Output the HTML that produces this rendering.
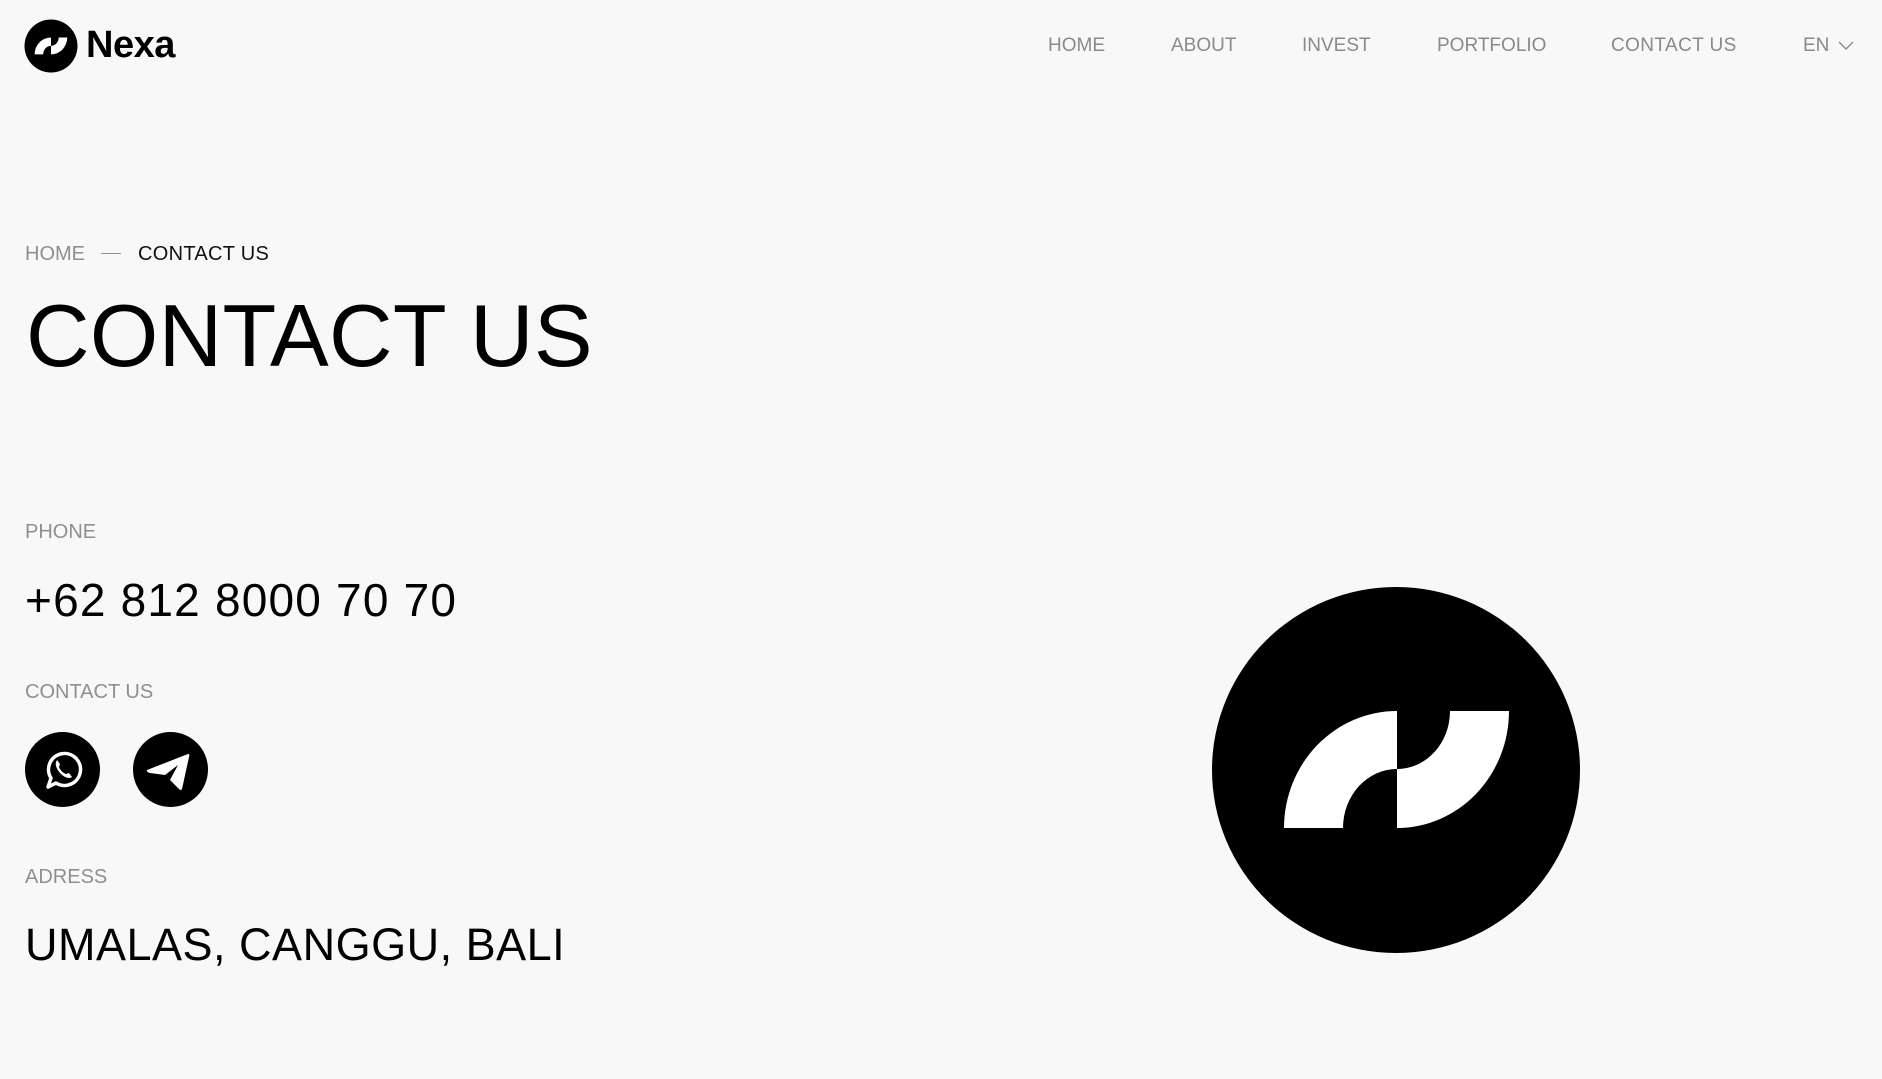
<!DOCTYPE html>
<html><head><meta charset="utf-8"><style>
html,body{margin:0;padding:0;background:#f8f8f8;width:1882px;height:1079px;overflow:hidden;font-family:"Liberation Sans",sans-serif;}
.a{position:absolute;white-space:nowrap;line-height:1;}
.nav{font-size:19px;color:#8a8a8a;top:36px;}
.lbl{font-size:20px;color:#8f8f8f;left:25px;}
.ic{position:absolute;width:75px;height:75px;border-radius:50%;background:#000;top:732px;}
</style></head><body>
<svg class="a" style="left:24px;top:19px" width="54" height="54" viewBox="0 0 54 54">
<circle cx="27" cy="27" r="26.5" fill="#000"/>
<g transform="translate(27,27) scale(0.145) translate(-1397,-770)" fill="#fff">
<path d="M1284 828 A113 117 0 0 1 1397 711 L1397 769 A54 59 0 0 0 1343 828 Z"/>
<path d="M1397 828 A112 117 0 0 0 1509 711 L1450 711 A53 58 0 0 1 1397 769 Z"/>
</g></svg>
<div class="a" style="left:86px;top:26px;font-size:38px;font-weight:bold;letter-spacing:-0.5px;color:#000">Nexa</div>
<div class="a nav" style="left:1048px">HOME</div>
<div class="a nav" style="left:1171px">ABOUT</div>
<div class="a nav" style="left:1302px">INVEST</div>
<div class="a nav" style="left:1437px">PORTFOLIO</div>
<div class="a nav" style="left:1611px;letter-spacing:0.4px">CONTACT US</div>
<div class="a nav" style="left:1803px">EN</div>
<svg class="a" style="left:1838px;top:41px" width="16" height="10" viewBox="0 0 16 10"><path d="M1 1 L8 8 L15 1" stroke="#8a8a8a" stroke-width="1.4" fill="none"/></svg>
<div class="a" style="left:25px;top:244px;font-size:20px;color:#8f8f8f">HOME</div>
<div class="a" style="left:101px;top:253px;width:20px;height:1px;background:#8f8f8f"></div>
<div class="a" style="left:138px;top:244px;font-size:20px;color:#111;letter-spacing:0.3px">CONTACT US</div>
<div class="a" style="left:26px;top:292px;font-size:88px;color:#000;letter-spacing:0.3px">CONTACT US</div>
<div class="a lbl" style="top:522px">PHONE</div>
<div class="a" style="left:25px;top:577px;font-size:46px;color:#000;letter-spacing:1.2px">+62 812 8000 70 70</div>
<div class="a lbl" style="top:682px">CONTACT US</div>
<div class="ic" style="left:25px"><svg width="75" height="75" viewBox="0 0 75 75"><path d="M23 55 L26 46 A16 16 0 1 1 31 51 Z" fill="none" stroke="#fff" stroke-width="3.5" stroke-linejoin="round"/><path d="M31 30 C30 33 32 38 36 42 C40 46 45 47 47 45 L44 41 L41 42 C38 41 35 38 34 35 L35 32 L32 28 Z" fill="#fff"/></svg></div>
<div class="ic" style="left:133px"><svg width="75" height="75" viewBox="0 0 75 75"><path d="M14 38 L55 22 Q57 22 56 25 L49 57 Q48 59 46 57 L37 48 L45 33 L32 43 L17 41 Q13 40 14 38 Z" fill="#fff"/></svg></div>
<div class="a lbl" style="top:867px">ADRESS</div>
<div class="a" style="left:25px;top:922px;font-size:45px;color:#000;letter-spacing:0.5px">UMALAS, CANGGU, BALI</div>
<svg class="a" style="left:1212px;top:587px" width="368" height="366" viewBox="1212 587 368 366">
<ellipse cx="1396" cy="770" rx="184" ry="183" fill="#000"/>
<path d="M1284 828 A113 117 0 0 1 1397 711 L1397 769 A54 59 0 0 0 1343 828 Z" fill="#fff"/>
<path d="M1397 828 A112 117 0 0 0 1509 711 L1450 711 A53 58 0 0 1 1397 769 Z" fill="#fff"/>
</svg>
</body></html>
